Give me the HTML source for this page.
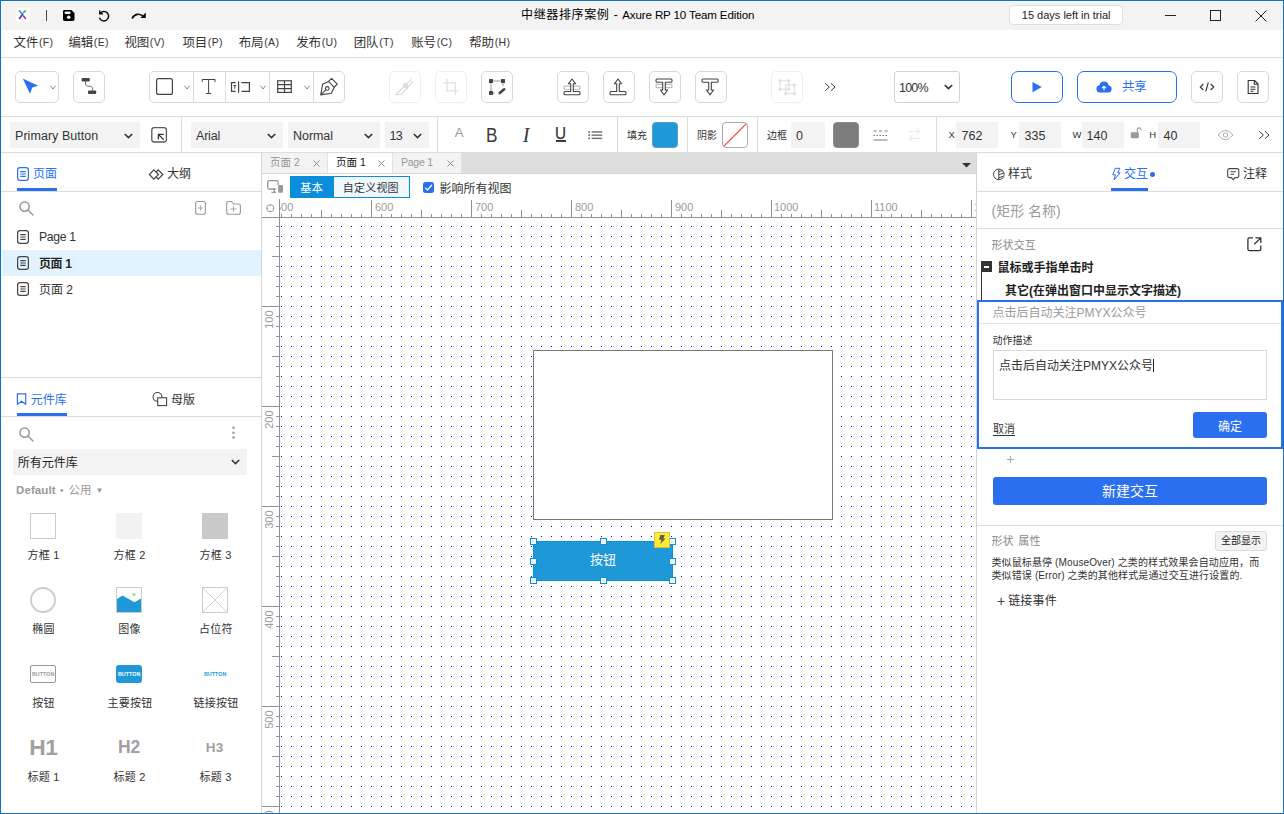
<!DOCTYPE html>
<html lang="zh-CN">
<head>
<meta charset="utf-8">
<title>中继器排序案例 - Axure RP 10 Team Edition</title>
<style>
*{box-sizing:border-box;margin:0;padding:0}
html,body{width:1284px;height:814px;overflow:hidden;background:#fff}
body{font-family:"Liberation Sans","Noto Sans CJK SC",sans-serif;font-size:13px;color:#333;position:relative}
.a{position:absolute}
.t{position:absolute;white-space:nowrap;line-height:1}
svg{position:absolute;overflow:visible}
.hl{position:absolute;height:1px;background:#dcdcdc}
.vl{position:absolute;width:1px;background:#dcdcdc}
.btn{position:absolute;border:1px solid #d9d9d9;border-radius:5px;background:#fff}
.btn.dis{border-color:#efefef}
.inp{position:absolute;background:#f3f3f3;height:26px;top:122px}
.lbl10{font-size:10px;color:#333}
.blue{color:#2a6ff0}
.menu .t{font-size:12.5px;top:36.500px;color:#333;letter-spacing:-.2px}
.menu .t i{font-style:normal;font-size:10.500px;letter-spacing:.4px;margin-left:.8px;position:relative;top:-1px}
.lib .t{font-size:11px;color:#333;transform:translateX(-50%);letter-spacing:.2px}
</style>
</head>
<body>
<!-- window frame -->
<div class="a" style="left:0;top:0;width:1284px;height:814px;border:1px solid #0b72c9;z-index:50;pointer-events:none"></div>

<!-- title bar -->
<div class="a" id="titlebar" style="left:1px;top:1px;width:1282px;height:29px;background:#f3f3f3;box-shadow:inset 1px 1px 0 #fffaf5">
 <!-- app logo -->
 <div class="a" style="left:15px;top:7px;width:14px;height:14px;border-radius:3.5px;background:#fff"></div>
 <svg style="left:15px;top:7px" width="14" height="14" viewBox="0.5 0.8 15 15" fill="none" stroke-linecap="round" stroke-width="1.7">
  <path d="M4.2 3.8L7.6 7.7" stroke="#1e9ad8"/><path d="M7.6 7.7L4.2 12" stroke="#3a37c4"/>
  <path d="M8.6 5.6L10.4 3.9" stroke="#43a33a"/><path d="M8.7 9.6L10.6 12" stroke="#d3169a"/>
 </svg>
 <div class="a" style="left:45px;top:9px;width:1px;height:11px;background:#444"></div>
 <!-- save -->
 <svg style="left:61.700px;top:9px" width="11.500" height="11" viewBox="0 0 12 12" preserveAspectRatio="none"><path d="M1.6 0h7.2L12 3.2v7.2A1.6 1.6 0 0 1 10.400 12H1.6A1.600 1.600 0 0 1 0 10.400V1.600A1.600 1.600 0 0 1 1.600 0Z" fill="#000"/><rect x="1.8" y="1.700" width="6" height="2.600" fill="#f3f3f3"/><circle cx="6" cy="8" r="1.900" fill="#f3f3f3"/></svg>
 <!-- undo -->
 <svg style="left:96.600px;top:8.600px" width="12" height="12" viewBox="0 0 12 12" fill="none" stroke="#111" stroke-width="1.500"><path d="M2.300 3.200A4.700 4.700 0 1 1 1.400 7.600"/><path d="M1.800 0.600V3.700H4.900" stroke-linejoin="miter"/></svg>
 <!-- redo -->
 <svg style="left:129.800px;top:10.400px" width="16" height="9" viewBox="0 0 16 9" fill="none" stroke="#111" stroke-width="1.700"><path d="M1 7.500C3.500 2.500 9 2 12.500 5.500"/><path d="M14.800 1.500V7H9.300Z" fill="#111" stroke="none"/></svg>
 <!-- title -->
 <div class="t" style="left:520px;top:7.500px;font-size:12px;color:#000"><span style="letter-spacing:.64px">中继器排序案例</span><span style="margin:0 4.500px 0 4.300px">-</span><span style="font-size:11.600px;letter-spacing:-.15px">Axure RP 10 Team Edition</span></div>
 <!-- trial badge -->
 <div class="a" style="left:1008px;top:4px;width:114px;height:20px;background:#fff;border:1px solid #dedede;border-radius:4px"></div>
 <div class="t" style="left:1020.800px;top:9px;font-size:11px;color:#222">15 days left in trial</div>
 <!-- window controls -->
 <svg style="left:1164px;top:9px" width="104" height="14" viewBox="0 0 104 14" fill="none" stroke="#222" stroke-width="1"><path d="M0 5.500H11"/><rect x="45.500" y="0.500" width="10" height="10"/><path d="M90.500 0.500L101.500 11.500M101.500 0.500L90.500 11.500"/></svg>
</div>

<!-- menu bar -->
<div class="menu" id="menubar">
 <div class="t" style="left:13.5px">文件<i>(F)</i></div>
 <div class="t" style="left:68.4px">编辑<i>(E)</i></div>
 <div class="t" style="left:124.4px">视图<i>(V)</i></div>
 <div class="t" style="left:182.4px">项目<i>(P)</i></div>
 <div class="t" style="left:238.8px">布局<i>(A)</i></div>
 <div class="t" style="left:296.3px">发布<i>(U)</i></div>
 <div class="t" style="left:353.8px">团队<i>(T)</i></div>
 <div class="t" style="left:411.3px">账号<i>(C)</i></div>
 <div class="t" style="left:469.3px">帮助<i>(H)</i></div>
</div>
<div class="hl" style="left:1px;top:57px;width:1282px"></div>

<!-- main toolbar -->
<div id="toolbar">
 <!-- select tool -->
 <div class="btn" style="left:15px;top:71px;width:44px;height:32px"></div>
 <svg style="left:0;top:0" width="1" height="1"><path d="M22.800 78.400L38.100 85.700L32.300 87.600L30 93.700Z" fill="#2a6ff5"/></svg>
 <svg style="left:49.6px;top:84.7px" width="6" height="5" viewBox="0 0 6 5" fill="none" stroke="#8a8a8a" stroke-width="1"><path d="M.5 .7L3 4L5.500 .7"/></svg>
 <!-- connector tool -->
 <div class="btn" style="left:73px;top:71px;width:32px;height:32px"></div>
 <svg style="left:0;top:0" width="1" height="1"><rect x="81.600" y="78" width="8.200" height="3.600" rx="1" fill="#444"/><rect x="88" y="90.400" width="8.200" height="3.600" rx="1" fill="#444"/><path d="M85.500 81.500V84C85.500 87.500 92.600 85 92.600 88.500V90.500" fill="none" stroke="#666" stroke-width="1"/></svg>
 <!-- shape group -->
 <div class="btn" style="left:149px;top:71px;width:196px;height:32px"></div>
 <div class="vl" style="left:193px;top:72px;height:30px"></div><div class="vl" style="left:225px;top:72px;height:30px"></div><div class="vl" style="left:269px;top:72px;height:30px"></div><div class="vl" style="left:313px;top:72px;height:30px"></div>
 <svg style="left:0;top:0" width="1" height="1" fill="none" stroke="#444" stroke-width="1.200">
  <rect x="156.600" y="78.600" width="15.800" height="15.800" rx="2"/>
  <path d="M202.200 82V79.500H215V82M208.600 79.500V93.500M206 93.500H211.200" stroke-width="1"/>
  <path d="M235.700 82.700H231.500V91.300H235.700M238.600 81.200V92.800M241.400 82.700H249.400V91.300H241.400"/>
  <path d="M233.300 85.600H236.300M234.800 85.600V88.800" stroke-width="1"/>
  <rect x="277.700" y="80.800" width="13.600" height="11.600"/><path d="M284.500 80.800V92.400M277.700 84.600H291.300M277.700 88.600H291.300"/>
  <path d="M320.700 94.900L322.600 84.300L328.500 81.400L334.300 87.300L331.300 93.200Z M328.500 81.400L331.600 78.400L337.200 84.100L334.300 87.300M320.900 94.700L326 89.700" stroke-width="1.100" stroke-linejoin="round"/><circle cx="327.300" cy="88.400" r="1.800" stroke-width="1.100"/>
 </svg>
 <svg style="left:183.5px;top:84.7px" width="6" height="5" viewBox="0 0 6 5" fill="none" stroke="#8a8a8a" stroke-width="1"><path d="M.5 .7L3 4L5.500 .7"/></svg><svg style="left:259.5px;top:84.7px" width="6" height="5" viewBox="0 0 6 5" fill="none" stroke="#8a8a8a" stroke-width="1"><path d="M.5 .7L3 4L5.500 .7"/></svg><svg style="left:303.5px;top:84.7px" width="6" height="5" viewBox="0 0 6 5" fill="none" stroke="#8a8a8a" stroke-width="1"><path d="M.5 .7L3 4L5.500 .7"/></svg>
 <!-- disabled: slice / crop -->
 <div class="btn dis" style="left:389px;top:71px;width:32px;height:32px"></div>
 <svg style="left:0;top:0" width="1" height="1" fill="none" stroke="#dcdcdc" stroke-width="1.200"><path d="M411.300 79.200L396 94.500H401.500L412.800 81.500"/><circle cx="405.500" cy="85.500" r="2" fill="#dcdcdc"/><path d="M403.500 84L408 88.500"/></svg>
 <div class="btn dis" style="left:435px;top:71px;width:32px;height:32px"></div>
 <svg style="left:0;top:0" width="1" height="1" fill="none" stroke="#e0e0e0" stroke-width="1.300"><path d="M443.300 82.800H455.300V94.700M447 79V90.800H458.600"/></svg>
 <!-- edit points -->
 <div class="btn" style="left:481px;top:71px;width:32px;height:32px"></div>
 <svg style="left:0;top:0" width="1" height="1"><path d="M491 81H503V86M491 81V93H495" fill="none" stroke="#999" stroke-width="1"/><rect x="489" y="79" width="4" height="4" rx=".5" fill="#444"/><rect x="501" y="79" width="4" height="4" rx=".5" fill="#444"/><rect x="489" y="91" width="4" height="4" rx=".5" fill="#444"/><path d="M499.700 93L504.200 89.300" stroke="#444" stroke-width="2.600" stroke-linecap="round"/></svg>
 <!-- order -->
 <div class="btn" style="left:557px;top:71px;width:32px;height:32px"></div><svg style="left:572px;top:0" width="1" height="1" viewBox="0 0 1 1" fill="none" stroke="#444" stroke-width="1.100" stroke-linejoin="round"><g><rect x="-8" y="86.200" width="16" height="3.300" rx="1.200" stroke="#bdbdbd" stroke-width="1.200"/><rect x="-1.900" y="85" width="3.800" height="6" fill="#fff" stroke="none"/><path d="M0 79L3.600 83.800H1.300V91.500H7a1 1 0 0 1 1 1V93.800a1 1 0 0 1 -1 1H-7a1 1 0 0 1 -1 -1V92.500a1 1 0 0 1 1 -1H-1.300V83.800H-3.600Z"/></g></svg>
 <div class="btn" style="left:603px;top:71px;width:32px;height:32px"></div><svg style="left:618px;top:0" width="1" height="1" viewBox="0 0 1 1" fill="none" stroke="#444" stroke-width="1.100" stroke-linejoin="round"><g><path d="M0 79L3.600 83.800H1.300V91.500H7a1 1 0 0 1 1 1V93.800a1 1 0 0 1 -1 1H-7a1 1 0 0 1 -1 -1V92.500a1 1 0 0 1 1 -1H-1.300V83.800H-3.600Z"/></g></svg>
 <div class="btn" style="left:649px;top:71px;width:32px;height:32px"></div><svg style="left:664px;top:0" width="1" height="1" viewBox="0 0 1 1" fill="none" stroke="#444" stroke-width="1.100" stroke-linejoin="round"><g transform="translate(0 173.800) scale(1 -1)"><rect x="-8" y="86.200" width="16" height="3.300" rx="1.200" stroke="#bdbdbd" stroke-width="1.200"/><rect x="-1.900" y="85" width="3.800" height="6" fill="#fff" stroke="none"/><path d="M0 79L3.600 83.800H1.300V91.500H7a1 1 0 0 1 1 1V93.800a1 1 0 0 1 -1 1H-7a1 1 0 0 1 -1 -1V92.500a1 1 0 0 1 1 -1H-1.300V83.800H-3.600Z"/></g></svg>
 <div class="btn" style="left:695px;top:71px;width:32px;height:32px"></div><svg style="left:710px;top:0" width="1" height="1" viewBox="0 0 1 1" fill="none" stroke="#444" stroke-width="1.100" stroke-linejoin="round"><g transform="translate(0 173.800) scale(1 -1)"><path d="M0 79L3.600 83.800H1.300V91.500H7a1 1 0 0 1 1 1V93.800a1 1 0 0 1 -1 1H-7a1 1 0 0 1 -1 -1V92.500a1 1 0 0 1 1 -1H-1.300V83.800H-3.600Z"/></g></svg>
 <!-- group (disabled) -->
 <div class="btn dis" style="left:771px;top:71px;width:32px;height:32px"></div>
 <svg style="left:0;top:0" width="1" height="1" fill="#dedede" stroke="#dedede" stroke-width="1"><rect x="780" y="80.700" width="8.700" height="8.500" fill="none"/><rect x="785.700" y="84.900" width="8.700" height="8.500" fill="none"/><g stroke="none"><circle cx="780" cy="80.700" r="1.500"/><circle cx="788.700" cy="80.700" r="1.500"/><circle cx="780" cy="89.200" r="1.500"/><circle cx="788.700" cy="89.200" r="1.500"/><circle cx="794.400" cy="84.900" r="1.500"/><circle cx="794.400" cy="93.400" r="1.500"/><circle cx="785.700" cy="93.400" r="1.500"/></g></svg>
 <svg style="left:0;top:0" width="1" height="1" fill="none" stroke="#3a3a3a" stroke-width="1"><path d="M825.300 83.300L829.300 87L825.300 90.700M831 83.300L835 87L831 90.700"/></svg>
 <!-- zoom -->
 <div class="btn" style="left:894px;top:71px;width:66px;height:32px;border-color:#d2d2d2;border-radius:3px"></div>
 <div class="t" style="left:899px;top:81.800px;font-size:12.500px;letter-spacing:-.8px;color:#333">100%</div>
 <svg style="left:943.5px;top:84.3px" width="9" height="6" viewBox="0 0 9 6" fill="none" stroke="#333" stroke-width="1.700"><path d="M.8 1L4.500 4.600L8.200 1"/></svg>
 <!-- preview -->
 <div class="btn" style="left:1011px;top:71px;width:52px;height:32px;border-color:#2a6ff0;border-radius:7px"></div>
 <svg style="left:0;top:0" width="1" height="1"><path d="M1032.500 82V92.200L1041.800 87.100Z" fill="#2a6ff0"/></svg>
 <!-- share -->
 <div class="btn" style="left:1077px;top:71px;width:100px;height:32px;border-color:#2a6ff0;border-radius:7px"></div>
 <svg style="left:1096px;top:80px" width="16" height="13" viewBox="0 0 16 13"><path d="M4 12.500A3.700 3.700 0 0 1 3.300 5.200A4.900 4.900 0 0 1 12.800 5.400A3.600 3.600 0 0 1 12.300 12.500Z" fill="#2a6ff0"/><path d="M8 10.300V6.500M6 8.200L8 6.200L10 8.200" fill="none" stroke="#fff" stroke-width="1.100"/></svg>
 <div class="t blue" style="left:1122px;top:80.500px;font-size:12.500px;letter-spacing:-.3px">共享</div>
 <!-- code / doc -->
 <div class="btn" style="left:1191px;top:71px;width:32px;height:32px"></div>
 <svg style="left:0;top:0" width="1" height="1" fill="none" stroke="#333" stroke-width="1.100"><path d="M1203.300 84L1200.300 87L1203.300 90M1210.700 84L1213.700 87L1210.700 90M1208.300 82.500L1205.700 91.500"/></svg>
 <div class="btn" style="left:1237px;top:71px;width:32px;height:32px"></div>
 <svg style="left:0;top:0" width="1" height="1" fill="none" stroke="#333" stroke-width="1.100" stroke-linejoin="round"><path d="M1248.200 80.500H1254.500L1258 84V93.500H1248.200ZM1254.300 80.700V84.200H1257.800M1250.500 87H1255.500M1250.500 89.200H1255.500M1250.500 91.300H1253.500"/></svg>
</div>
<div class="hl" style="left:1px;top:116px;width:1282px"></div>

<!-- style bar -->
<div id="stylebar">
 <div class="inp" style="left:10px;width:130px"></div>
 <div class="t" style="left:15px;top:129.500px;font-size:12.500px;letter-spacing:.05px">Primary Button</div>
 <svg style="left:123.5px;top:132.8px" width="9" height="6" viewBox="0 0 9 6" fill="none" stroke="#333" stroke-width="1.600"><path d="M.8 1L4.500 4.600L8.200 1"/></svg>
 <svg style="left:0;top:0" width="1" height="1" fill="none" stroke="#444" stroke-width="1.200"><rect x="151.800" y="127.700" width="14.600" height="14.300" rx="2.500" stroke="#5a5a5a" stroke-width="1.300"/><path d="M163.800 139.800L158.600 134.600M158.400 139.400V134.400H163.800" stroke="#333" stroke-width="1.300"/></svg>
 <div class="vl" style="left:181px;top:117px;height:35px"></div>
 <div class="inp" style="left:191px;width:92px"></div>
 <div class="t" style="left:196px;top:129.500px;font-size:12.500px;letter-spacing:-.2px">Arial</div>
 <svg style="left:266.5px;top:132.8px" width="9" height="6" viewBox="0 0 9 6" fill="none" stroke="#333" stroke-width="1.600"><path d="M.8 1L4.500 4.600L8.200 1"/></svg>
 <div class="inp" style="left:288px;width:92px"></div>
 <div class="t" style="left:293px;top:129.500px;font-size:12.500px;letter-spacing:-.05px">Normal</div>
 <svg style="left:363.5px;top:132.8px" width="9" height="6" viewBox="0 0 9 6" fill="none" stroke="#333" stroke-width="1.600"><path d="M.8 1L4.500 4.600L8.200 1"/></svg>
 <div class="inp" style="left:385px;width:44px"></div>
 <div class="t" style="left:389.500px;top:129.500px;font-size:12.500px;letter-spacing:-.6px">13</div>
 <svg style="left:412.5px;top:132.8px" width="9" height="6" viewBox="0 0 9 6" fill="none" stroke="#333" stroke-width="1.600"><path d="M.8 1L4.500 4.600L8.200 1"/></svg>
 <div class="vl" style="left:437px;top:117px;height:35px"></div>
 <div class="t" style="left:454.800px;top:126.200px;font-size:13.200px;color:#999">A</div>
 <div class="t" style="left:486.300px;top:125.800px;font-size:19.600px;color:#3a3a3a;transform:scaleX(.88);transform-origin:0 0">B</div>
 <div class="t" style="left:522.800px;top:124.500px;font-size:20.400px;color:#3a3a3a;font-family:'Liberation Serif',serif;font-style:italic">I</div>
 <div class="t" style="left:555.100px;top:124.600px;font-size:16.300px;color:#3a3a3a;-webkit-text-stroke:.25px #3a3a3a;transform:scaleX(.94);transform-origin:0 0">U</div>
 <div class="a" style="left:556px;top:140px;width:10px;height:1.800px;background:#3a3a3a"></div>
 <svg style="left:0;top:0" width="1" height="1" fill="#777"><rect x="588.200" y="131.100" width="1.800" height="1.700"/><rect x="588.200" y="134.300" width="1.800" height="1.700"/><rect x="588.200" y="137.500" width="1.800" height="1.700"/><rect x="591.600" y="131.200" width="10.600" height="1.500"/><rect x="591.600" y="134.400" width="10.600" height="1.500"/><rect x="591.600" y="137.600" width="10.600" height="1.500"/></svg>
 <div class="vl" style="left:617px;top:117px;height:35px"></div>
 <div class="t lbl10" style="left:627px;top:130.500px">填充</div>
 <div class="a" style="left:652px;top:122px;width:26px;height:26px;border-radius:4px;background:#1e98d7;border:1px solid #5a9cc0"></div>
 <div class="vl" style="left:687px;top:117px;height:35px"></div>
 <div class="t lbl10" style="left:697px;top:130.500px">阴影</div>
 <div class="a" style="left:722px;top:122px;width:26px;height:26px;border-radius:4px;background:#fff;border:1px solid #a9a9a9;overflow:hidden"><svg style="left:0;top:0" width="24" height="24"><path d="M0 24L24 0" stroke="#ff3b3b" stroke-width="1.200"/></svg></div>
 <div class="vl" style="left:757px;top:117px;height:35px"></div>
 <div class="t lbl10" style="left:767px;top:130.500px">边框</div>
 <div class="inp" style="left:791px;width:34px"></div>
 <div class="t" style="left:796px;top:129.500px;font-size:12.500px">0</div>
 <div class="a" style="left:833px;top:122px;width:26px;height:26px;border-radius:4px;background:#7d7d7d;border:1px solid #8c8c8c"></div>
 <svg style="left:0;top:0" width="1" height="1" fill="none" stroke="#6a6a6a" stroke-width=".9"><path d="M873.500 131H887.500" stroke-dasharray="3 2.500"/><path d="M873.500 135.500H887.500" stroke-dasharray="1.500 1.500"/><path d="M873.500 140H887.500"/></svg>
 <svg style="left:0;top:0" width="1" height="1" fill="none" stroke="#ececec" stroke-width="1.200"><path d="M909 131.500H919.500M916.500 128.500L919.500 131.500L916.500 134.500M920 138.500H909.500M912.500 135.500L909.500 138.500L912.500 141.500"/></svg>
 <div class="vl" style="left:936px;top:117px;height:35px"></div>
 <div class="t" style="left:948.5px;top:130.300px;font-size:9.500px;color:#333">X</div>
 <div class="inp" style="left:956px;width:42px"></div>
 <div class="t" style="left:961.500px;top:129.500px;font-size:12.500px">762</div>
 <div class="t" style="left:1010.5px;top:130.300px;font-size:9.500px;color:#333">Y</div>
 <div class="inp" style="left:1019px;width:42px"></div>
 <div class="t" style="left:1024.500px;top:129.500px;font-size:12.500px">335</div>
 <div class="t" style="left:1072.5px;top:130.300px;font-size:9.500px;color:#333">W</div>
 <div class="inp" style="left:1082px;width:42px"></div>
 <div class="t" style="left:1086.500px;top:129.500px;font-size:12.500px">140</div>
 <svg style="left:0;top:0" width="1" height="1"><rect x="1130.800" y="132.300" width="8" height="6" rx=".8" fill="#9a9a9a"/><path d="M1137.300 132V129.500A1.900 1.900 0 0 1 1141 129.300V130.300" fill="none" stroke="#9a9a9a" stroke-width="1.100"/></svg>
 <div class="t" style="left:1149.3px;top:130.300px;font-size:9.500px;color:#333">H</div>
 <div class="inp" style="left:1158px;width:42px"></div>
 <div class="t" style="left:1163.500px;top:129.500px;font-size:12.500px">40</div>
 <svg style="left:0;top:0" width="1" height="1" fill="none" stroke="#a8a8a8" stroke-width="1"><path d="M1218.200 135C1221 131.500 1223.500 130.500 1225.500 130.500C1227.500 130.500 1230 131.500 1232.800 135C1230 138.500 1227.500 139.500 1225.500 139.500C1223.500 139.500 1221 138.500 1218.200 135Z"/><circle cx="1225.500" cy="135" r="2.200"/></svg>
 <svg style="left:0;top:0" width="1" height="1" fill="none" stroke="#3a3a3a" stroke-width="1"><path d="M1259.300 131.300L1263.300 135L1259.300 138.700M1265 131.300L1269 135L1265 138.700"/></svg>
</div>
<div class="hl" style="left:1px;top:152px;width:1282px"></div>

<!-- left panel -->
<div id="left">
 <div class="vl" style="left:261px;top:153px;height:660px;background:#d4d4d4"></div>
 <!-- pages / outline tabs -->
 <svg style="left:17px;top:167px" width="12" height="14" viewBox="0 0 12 14" fill="none" stroke="#2a6ff0" stroke-width="1.200"><rect x=".6" y=".6" width="10.800" height="12.800" rx="2.400"/><path d="M3.300 4.600H8.700M3.300 7H8.700M3.300 9.400H8.700" stroke-width="1.100"/></svg>
 <div class="t blue" style="left:33px;top:168.300px;font-size:12px">页面</div>
 <div class="a" style="left:17px;top:188px;width:40px;height:3px;background:#2a6ff0"></div>
 <svg style="left:0;top:0" width="1" height="1" fill="none" stroke="#444" stroke-width="1.200"><path d="M153.800 169.800L158.500 174.500L153.800 179.200L149.400 174.500Z"/><path d="M156.300 172L158.200 169.800L162.800 174.500L158.200 179.200L156.300 177.200"/></svg>
 <div class="t" style="left:167px;top:168.300px;font-size:12px;color:#333">大纲</div>
 <div class="hl" style="left:1px;top:191px;width:260px"></div>
 <svg style="left:18.7px;top:201px" width="15" height="15" viewBox="0 0 15 15" fill="none" stroke="#999" stroke-width="1.500"><circle cx="5.600" cy="5.600" r="4.600"/><path d="M9 9L14 14" stroke-linecap="round"/></svg>
 <svg style="left:0;top:0" width="1" height="1" fill="none" stroke="#999" stroke-width="1.100"><rect x="195.600" y="201.500" width="9.800" height="12.800" rx="2"/><path d="M198 208H203M200.500 205.500V210.500" stroke="#aaa"/><path d="M226.700 212.300V203.500A2 2 0 0 1 228.700 201.500H231.500L233.500 204H238.400A2 2 0 0 1 240.400 206V212.300A2 2 0 0 1 238.400 214.300H228.700A2 2 0 0 1 226.700 212.300Z"/><path d="M230.500 209H236.500M233.500 206.200V211.800" stroke="#aaa"/></svg>
 <!-- page tree -->
 <svg style="left:17px;top:230px" width="12" height="14" viewBox="0 0 12 14" fill="none" stroke="#444" stroke-width="1.200"><rect x=".6" y=".6" width="10.800" height="12.800" rx="2.400"/><path d="M3.300 4.600H8.700M3.300 7H8.700M3.300 9.400H8.700" stroke-width="1.100"/></svg>
 <div class="t" style="left:39px;top:231px;font-size:12.200px;letter-spacing:-.3px;color:#333">Page 1</div>
 <div class="a" style="left:2px;top:250px;width:259px;height:26px;background:#e0f3fe"></div>
 <svg style="left:17px;top:256px" width="12" height="14" viewBox="0 0 12 14" fill="none" stroke="#444" stroke-width="1.200"><rect x=".6" y=".6" width="10.800" height="12.800" rx="2.400"/><path d="M3.300 4.600H8.700M3.300 7H8.700M3.300 9.400H8.700" stroke-width="1.100"/></svg>
 <div class="t" style="left:39px;top:258px;font-size:12px;color:#222;font-weight:bold;letter-spacing:-.4px">页面 1</div>
 <svg style="left:17px;top:282px" width="12" height="14" viewBox="0 0 12 14" fill="none" stroke="#444" stroke-width="1.200"><rect x=".6" y=".6" width="10.800" height="12.800" rx="2.400"/><path d="M3.300 4.600H8.700M3.300 7H8.700M3.300 9.400H8.700" stroke-width="1.100"/></svg>
 <div class="t" style="left:39px;top:284px;font-size:12px;color:#333">页面 2</div>
 <div class="hl" style="left:1px;top:377px;width:260px"></div>
 <!-- libraries / masters tabs -->
 <svg style="left:0;top:0" width="1" height="1" fill="none" stroke="#2a6ff0" stroke-width="1.200" stroke-linejoin="round"><path d="M17.400 393.800H25.700V404.300L21.550 401.200L17.400 404.300Z"/></svg>
 <div class="t blue" style="left:30.800px;top:393.600px;font-size:12px">元件库</div>
 <div class="a" style="left:17px;top:413px;width:50px;height:3px;background:#2a6ff0"></div>
 <svg style="left:0;top:0" width="1" height="1" fill="none" stroke="#444" stroke-width="1.100"><circle cx="157.500" cy="396.900" r="4.400"/><rect x="157.700" y="397.800" width="8.900" height="7.800" fill="#fff"/></svg>
 <div class="t" style="left:171px;top:393.600px;font-size:12px;color:#333">母版</div>
 <div class="hl" style="left:1px;top:416px;width:260px"></div>
 <svg style="left:18.7px;top:426.5px" width="15" height="15" viewBox="0 0 15 15" fill="none" stroke="#999" stroke-width="1.500"><circle cx="5.600" cy="5.600" r="4.600"/><path d="M9 9L14 14" stroke-linecap="round"/></svg>
 <svg style="left:0;top:0" width="1" height="1" fill="#999"><circle cx="233.500" cy="427.800" r="1.250"/><circle cx="233.500" cy="432.700" r="1.250"/><circle cx="233.500" cy="437.600" r="1.250"/></svg>
 <div class="a" style="left:13px;top:449px;width:234px;height:26px;background:#f3f3f3"></div>
 <div class="t" style="left:17.800px;top:456.500px;font-size:12px;color:#222">所有元件库</div>
 <svg style="left:230.800px;top:459.200px" width="9" height="6" viewBox="0 0 9 6" fill="none" stroke="#333" stroke-width="1.500"><path d="M.8 1L4.500 4.600L8.200 1"/></svg>
 <div class="t" style="left:16px;top:484.500px;font-size:11.500px;color:#999;letter-spacing:.1px"><b>Default</b> <span style="font-size:10px;position:relative;top:0;margin:0 1.500px 0 1px">•</span> 公用 <span style="font-size:8px;position:relative;top:-1px;margin-left:.5px">▼</span></div>
 <!-- library grid -->
 <div class="lib">
  <div class="a" style="left:30px;top:513px;width:26px;height:26px;border:1px solid #ccc;background:#fff"></div>
  <div class="a" style="left:116px;top:513px;width:26px;height:26px;background:#f2f2f2"></div>
  <div class="a" style="left:202px;top:513px;width:26px;height:26px;background:#c9c9c9"></div>
  <div class="t" style="left:43.5px;top:549.5px">方框 1</div><div class="t" style="left:129.5px;top:549.5px">方框 2</div><div class="t" style="left:215.5px;top:549.5px">方框 3</div>
  <div class="a" style="left:30px;top:587px;width:26px;height:26px;border:2px solid #cdcdcd;border-radius:50%"></div>
  <div class="a" style="left:116px;top:587px;width:26px;height:26px;border:1px solid #ccc;background:#fff;overflow:hidden"><svg style="left:0;top:0" width="24" height="24"><path d="M0 11L5.500 7.500L17.500 14.300L24 10.500V24H0Z" fill="#1e98d7"/><circle cx="17" cy="6.500" r="1.800" fill="#ccc"/></svg></div>
  <div class="a" style="left:202px;top:587px;width:26px;height:26px;border:1px solid #ccc;background:#fff;overflow:hidden"><svg style="left:0;top:0" width="24" height="24"><path d="M0 0L24 24M24 0L0 24" stroke="#ccc" stroke-width=".9"/></svg></div>
  <div class="t" style="left:43.5px;top:623.5px">椭圆</div><div class="t" style="left:129.5px;top:623.5px">图像</div><div class="t" style="left:215.8px;top:623.5px">占位符</div>
  <div class="a" style="left:30px;top:665px;width:26px;height:18px;border:1px solid #999;border-radius:2px;background:#fff"></div>
  <div class="a" style="left:116px;top:665px;width:26px;height:18px;border-radius:3px;background:#1e98d7"></div>
  <div class="t" style="left:43.200px;top:671.500px;font-size:5.300px;font-weight:bold;color:#9a9a9a;letter-spacing:.1px">BUTTON</div>
  <div class="t" style="left:129.200px;top:671.500px;font-size:5.300px;font-weight:bold;color:#fff;letter-spacing:.1px">BUTTON</div>
  <div class="t" style="left:215.200px;top:671.500px;font-size:5.300px;font-weight:bold;color:#1e98d7;letter-spacing:.1px">BUTTON</div>
  <div class="t" style="left:43.5px;top:697.5px">按钮</div><div class="t" style="left:130px;top:697.5px">主要按钮</div><div class="t" style="left:216px;top:697.5px">链接按钮</div>
  <div class="t" style="left:43.300px;top:736px;font-size:22.800px;font-weight:bold;color:#a0a0a0;letter-spacing:-.5px">H1</div>
  <div class="t" style="left:129px;top:739px;font-size:17.500px;font-weight:bold;color:#a0a0a0;letter-spacing:-.3px">H2</div>
  <div class="t" style="left:214.600px;top:741px;font-size:13.500px;font-weight:bold;color:#a0a0a0">H3</div>
  <div class="t" style="left:43.5px;top:771.5px">标题 1</div><div class="t" style="left:129.5px;top:771.5px">标题 2</div><div class="t" style="left:215.5px;top:771.5px">标题 3</div>
 </div>
</div>

<!-- canvas -->
<div id="canvas">
 <!-- page tabs -->
 <div class="a" style="left:262px;top:153px;width:714px;height:20px;background:#dedede"></div>
 <div class="hl" style="left:262px;top:173px;width:714px;background:#d6d6d6"></div>
 <div class="a" style="left:262px;top:153px;width:66px;height:20px;background:#f3f3f3;border-right:1px solid #e2e2e2"></div><div class="t" style="left:270px;top:157.300px;font-size:10.500px;color:#969696">页面 2</div><svg style="left:313px;top:160px" width="7" height="7" viewBox="0 0 7 7" stroke="#8c8c8c" stroke-width="1" fill="none"><path d="M.5 .5L6.500 6.500M6.500 .5L.5 6.500"/></svg>
 <div class="a" style="left:328px;top:153px;width:65px;height:20px;background:#fff;border-right:1px solid #e2e2e2"></div><div class="t" style="left:336px;top:157.300px;font-size:10.500px;color:#111">页面 1</div><svg style="left:378px;top:160px" width="7" height="7" viewBox="0 0 7 7" stroke="#8c8c8c" stroke-width="1" fill="none"><path d="M.5 .5L6.500 6.500M6.500 .5L.5 6.500"/></svg>
 <div class="a" style="left:393px;top:153px;width:69px;height:20px;background:#f3f3f3;border-right:1px solid #e2e2e2"></div><div class="t" style="left:401px;top:157.300px;font-size:10.500px;color:#969696;letter-spacing:-.25px">Page 1</div><svg style="left:447px;top:160px" width="7" height="7" viewBox="0 0 7 7" stroke="#8c8c8c" stroke-width="1" fill="none"><path d="M.5 .5L6.500 6.500M6.500 .5L.5 6.500"/></svg>
 <svg style="left:0;top:0" width="1" height="1"><path d="M962 163H971L966.500 167.500Z" fill="#333"/></svg>
 <!-- adaptive view bar -->
 <svg style="left:0;top:0" width="1" height="1" fill="none" stroke="#999" stroke-width="1.300"><path d="M278 185V182.200A1.500 1.500 0 0 0 276.500 180.700H269.200A1.500 1.500 0 0 0 267.700 182.200V187.500A1.500 1.500 0 0 0 269.200 189H276M274.300 189V192M271.500 192.300H276"/><rect x="278.200" y="185" width="4.800" height="7.700" rx="1" fill="#999" stroke="none"/></svg>
 <div class="a" style="left:290px;top:176px;width:120px;height:22px;border:1px solid #0a8ddb;background:#f0f8fe"></div>
 <div class="a" style="left:290px;top:176px;width:44px;height:22px;background:#0a8ddb"></div>
 <div class="t" style="left:300px;top:183.200px;font-size:11.500px;color:#fff">基本</div>
 <div class="t" style="left:342.800px;top:183.200px;font-size:11px;color:#333;letter-spacing:.2px">自定义视图</div>
 <div class="a" style="left:423px;top:182px;width:11px;height:11px;border-radius:2.500px;background:#2a6ff0"></div>
 <svg style="left:423px;top:182px" width="11" height="11" viewBox="0 0 11 11" fill="none" stroke="#fff" stroke-width="1.300"><path d="M2.200 5.600L4.500 8L9 2.800"/></svg>
 <div class="t" style="left:439.500px;top:182.800px;font-size:12px;color:#333">影响所有视图</div>
 <!-- canvas surface with grid -->
 <svg style="left:0;top:0" width="976" height="814" viewBox="0 0 976 814">
  <defs><pattern id="dots" x="281" y="226" width="10" height="10" patternUnits="userSpaceOnUse"><rect width="1" height="1" fill="#0000ff"/></pattern>
  <clipPath id="hclip"><rect x="280" y="198" width="696" height="20"/></clipPath><clipPath id="vclip"><rect x="262" y="218" width="18" height="595"/></clipPath></defs>
  <rect x="280" y="218" width="696" height="595" fill="url(#dots)"/>
  <!-- rulers -->
  <g stroke="#919191" stroke-width="1" fill="none" shape-rendering="crispEdges"><path d="M262 217.500H976M279.500 199V813"/><path d="M281.5 214V217M291.5 214V217M301.5 214V217M311.5 214V217M331.5 214V217M341.5 214V217M351.5 214V217M361.5 214V217M381.5 214V217M391.5 214V217M401.5 214V217M411.5 214V217M431.5 214V217M441.5 214V217M451.5 214V217M461.5 214V217M481.5 214V217M491.5 214V217M501.5 214V217M511.5 214V217M531.5 214V217M541.5 214V217M551.5 214V217M561.5 214V217M581.5 214V217M591.5 214V217M601.5 214V217M611.5 214V217M631.5 214V217M641.5 214V217M651.5 214V217M661.5 214V217M681.5 214V217M691.5 214V217M701.5 214V217M711.5 214V217M731.5 214V217M741.5 214V217M751.5 214V217M761.5 214V217M781.5 214V217M791.5 214V217M801.5 214V217M811.5 214V217M831.5 214V217M841.5 214V217M851.5 214V217M861.5 214V217M881.5 214V217M891.5 214V217M901.5 214V217M911.5 214V217M931.5 214V217M941.5 214V217M951.5 214V217M961.5 214V217M321.5 210V217M421.5 210V217M521.5 210V217M621.5 210V217M721.5 210V217M821.5 210V217M921.5 210V217M371.5 200V217M471.5 200V217M571.5 200V217M671.5 200V217M771.5 200V217M871.5 200V217M971.5 200V217"/><path d="M276 226.5H279M276 236.5H279M276 246.5H279M276 266.5H279M276 276.5H279M276 286.5H279M276 296.5H279M276 316.5H279M276 326.5H279M276 336.5H279M276 346.5H279M276 366.5H279M276 376.5H279M276 386.5H279M276 396.5H279M276 416.5H279M276 426.5H279M276 436.5H279M276 446.5H279M276 466.5H279M276 476.5H279M276 486.5H279M276 496.5H279M276 516.5H279M276 526.5H279M276 536.5H279M276 546.5H279M276 566.5H279M276 576.5H279M276 586.5H279M276 596.5H279M276 616.5H279M276 626.5H279M276 636.5H279M276 646.5H279M276 666.5H279M276 676.5H279M276 686.5H279M276 696.5H279M276 716.5H279M276 726.5H279M276 736.5H279M276 746.5H279M276 766.5H279M276 776.5H279M276 786.5H279M276 796.5H279M272 256.5H279M272 356.5H279M272 456.5H279M272 556.5H279M272 656.5H279M272 756.5H279M262 306.5H279M262 406.5H279M262 506.5H279M262 606.5H279M262 706.5H279M262 806.5H279"/></g>
  <g font-family="Liberation Sans, sans-serif" font-size="11" fill="#9a9a9a"><g clip-path="url(#hclip)"><text x="275" y="211.200">500</text><text x="375" y="211.200">600</text><text x="475" y="211.200">700</text><text x="575" y="211.200">800</text><text x="675" y="211.200">900</text><text x="774" y="211.200">1000</text><text x="874" y="211.200">1100</text><text x="974" y="211.200">1200</text></g><g clip-path="url(#vclip)"><text transform="translate(272.800 328.8) rotate(-90)">100</text><text transform="translate(272.800 428.8) rotate(-90)">200</text><text transform="translate(272.800 528.8) rotate(-90)">300</text><text transform="translate(272.800 628.8) rotate(-90)">400</text><text transform="translate(272.800 728.8) rotate(-90)">500</text><text transform="translate(272.800 828.8) rotate(-90)">600</text></g></g>
  <g fill="none" stroke="#999" stroke-width=".9"><circle cx="270.300" cy="208.300" r="3.600"/><path d="M270.300 204.300V206M270.300 210.600V212.300M266.300 208.300H268M272.600 208.300H274.300"/></g>
  <!-- widgets -->
  <rect x="533.500" y="350.500" width="299" height="169" fill="#fff" stroke="#797979" shape-rendering="crispEdges"/>
  <rect x="533.500" y="541.500" width="139" height="39" fill="#1e98d7" stroke="#0a90de" shape-rendering="crispEdges"/>
  <g fill="#fffcf8" stroke="#0a90de" stroke-width="1" shape-rendering="crispEdges"><rect x="530.5" y="538.5" width="6" height="6"/><rect x="600.5" y="538.5" width="6" height="6"/><rect x="669.5" y="538.5" width="6" height="6"/><rect x="530.5" y="558.5" width="6" height="6"/><rect x="669.5" y="558.5" width="6" height="6"/><rect x="530.5" y="577.5" width="6" height="6"/><rect x="600.5" y="577.5" width="6" height="6"/><rect x="669.5" y="577.5" width="6" height="6"/></g>
  <g fill="#f0f0f0" shape-rendering="crispEdges"><rect x="532" y="540" width="3" height="3"/><rect x="602" y="540" width="3" height="3"/><rect x="671" y="540" width="3" height="3"/><rect x="532" y="560" width="3" height="3"/><rect x="671" y="560" width="3" height="3"/><rect x="532" y="579" width="3" height="3"/><rect x="602" y="579" width="3" height="3"/><rect x="671" y="579" width="3" height="3"/></g><rect x="654.500" y="532.500" width="15" height="15" fill="#ffeb33" stroke="#d2be48" shape-rendering="crispEdges"/>
  <path d="M660.300 535.100H664.800L663.400 538.400H665.600L660.300 544L661.700 539.700H659.100Z" fill="#5a5a55"/>
 </svg>
 <div class="t" style="left:590px;top:553.200px;font-size:13px;color:#fff">按钮</div>
</div>

<!-- right panel -->
<div id="right">
 <div class="vl" style="left:976px;top:153px;height:660px;background:#d4d4d4"></div>
 <div class="a" style="left:977px;top:153px;width:306px;height:660px;background:#fff"></div>
 <!-- tabs -->
 <svg style="left:0;top:0" width="1" height="1" fill="none" stroke="#444" stroke-width="1"><circle cx="998.800" cy="174.400" r="5.300"/><path d="M998.800 169.100V179.700M998.800 171.800L1002.800 170.200M998.800 174.800L1004 172.800M998.800 177.800L1003 176.300"/></svg>
 <div class="t" style="left:1008px;top:168.300px;font-size:12px;color:#333">样式</div>
 <svg style="left:0;top:0" width="1" height="1" fill="none" stroke="#2a6ff0" stroke-width="1" stroke-linejoin="round"><path d="M1115.300 168.300H1119.800L1117.700 172.800H1120.200L1114 180L1115.500 174.800H1112.800Z"/></svg>
 <div class="t blue" style="left:1124px;top:168.300px;font-size:12px">交互</div>
 <div class="a" style="left:1150px;top:171.500px;width:5px;height:5px;border-radius:50%;background:#2a6ff0"></div>
 <div class="a" style="left:1111px;top:188px;width:37px;height:3px;background:#2a6ff0"></div>
 <svg style="left:0;top:0" width="1" height="1" fill="none" stroke="#444" stroke-width="1.100" stroke-linejoin="round"><path d="M1229.500 168.600H1237A1.800 1.800 0 0 1 1238.800 170.400V175.800A1.800 1.800 0 0 1 1237 177.600H1235L1233.200 179.600L1231.500 177.600H1229.500A1.800 1.800 0 0 1 1227.700 175.800V170.400A1.800 1.800 0 0 1 1229.500 168.600ZM1230.500 171.700H1236M1230.500 174.300H1234"/></svg>
 <div class="t" style="left:1243px;top:168.300px;font-size:12px;color:#333">注释</div>
 <div class="hl" style="left:977px;top:191px;width:306px"></div>
 <div class="t" style="left:991.500px;top:204.300px;font-size:14px;color:#9b9b9b">(矩形 名称)</div>
 <div class="hl" style="left:977px;top:228px;width:306px"></div>
 <!-- interactions -->
 <div class="t" style="left:991.500px;top:240px;font-size:11px;color:#8a8a8a;letter-spacing:.1px">形状交互</div>
 <svg style="left:0;top:0" width="1" height="1" fill="none" stroke="#333" stroke-width="1.300"><path d="M1253 237.800H1249.500A1.600 1.600 0 0 0 1247.900 239.400V249.100A1.600 1.600 0 0 0 1249.500 250.700H1259.200A1.600 1.600 0 0 0 1260.800 249.100V245.500M1255.500 237.800H1260.800V243M1260.500 238.100L1254.300 244.300"/></svg>
 <div class="a" style="left:981px;top:261px;width:11px;height:11px;background:#333"></div>
 <div class="a" style="left:984px;top:266px;width:5px;height:1.500px;background:#fff"></div>
 <div class="a" style="left:981px;top:272px;width:1px;height:28px;background:#333"></div>
 <div class="t" style="left:997.500px;top:261.500px;font-size:12px;font-weight:bold;color:#222">鼠标或手指单击时</div>
 <div class="t" style="left:1005px;top:284.500px;font-size:12px;font-weight:bold;color:#222">其它(在弹出窗口中显示文字描述)</div>
 <!-- action editor -->
 <div class="a" style="left:977px;top:300px;width:306px;height:149px;border:2px solid #2a6ff0;background:#fff"></div>
 <div class="t" style="left:992.500px;top:307.200px;font-size:12px;color:#9b9b9b">点击后自动关注PMYX公众号</div>
 <div class="hl" style="left:979px;top:323px;width:302px;background:#e4e4e4"></div>
 <div class="t" style="left:992.500px;top:336px;font-size:10px;color:#333">动作描述</div>
 <div class="a" style="left:993px;top:350px;width:274px;height:50px;border:1px solid #d9d9d9;background:#fff"></div>
 <div class="t" style="left:999px;top:360.200px;font-size:12px;color:#333">点击后自动关注PMYX公众号</div>
 <div class="a" style="left:1153px;top:359px;width:1px;height:13px;background:#222"></div>
 <div class="t" style="left:993px;top:423.500px;font-size:11px;color:#333;text-decoration:underline;text-underline-offset:1.500px">取消</div>
 <div class="a" style="left:1193px;top:412px;width:74px;height:26px;border-radius:3px;background:#2a6ff0"></div>
 <div class="t" style="left:1218px;top:421.100px;font-size:12px;color:#fff">确定</div>
 <svg style="left:0;top:0" width="1" height="1" fill="none" stroke="#aaa" stroke-width="1"><path d="M1007 459.500H1014M1010.500 456V463"/></svg>
 <div class="a" style="left:993px;top:477px;width:274px;height:28px;border-radius:3px;background:#2a6ff0"></div>
 <div class="t" style="left:1102px;top:483.500px;font-size:14px;color:#fff">新建交互</div>
 <div class="hl" style="left:977px;top:525px;width:306px"></div>
 <!-- shape properties -->
 <div class="t" style="left:991.500px;top:535.900px;font-size:11px;color:#8a8a8a;letter-spacing:.1px;word-spacing:1.500px">形状 属性</div>
 <div class="a" style="left:1215px;top:531px;width:52px;height:20px;border:1px solid #dcdcdc;border-radius:3px;background:#f3f3f3"></div>
 <div class="t" style="left:1221px;top:535.500px;font-size:10px;color:#222">全部显示</div>
 <div class="t" style="left:991.500px;top:557.500px;font-size:10px;letter-spacing:.12px;color:#333">类似鼠标悬停 (MouseOver) 之类的样式效果会自动应用，而</div>
 <div class="t" style="left:991.500px;top:570.500px;font-size:10px;letter-spacing:.12px;color:#333">类似错误 (Error) 之类的其他样式是通过交互进行设置的.</div>
 <div class="t" style="left:997px;top:593.200px;font-size:12px;color:#333"><span style="color:#444;margin-right:3px;font-size:14px;position:relative;top:.5px">+</span><span style="letter-spacing:.15px">链接事件</span></div>
</div>
</body>
</html>
